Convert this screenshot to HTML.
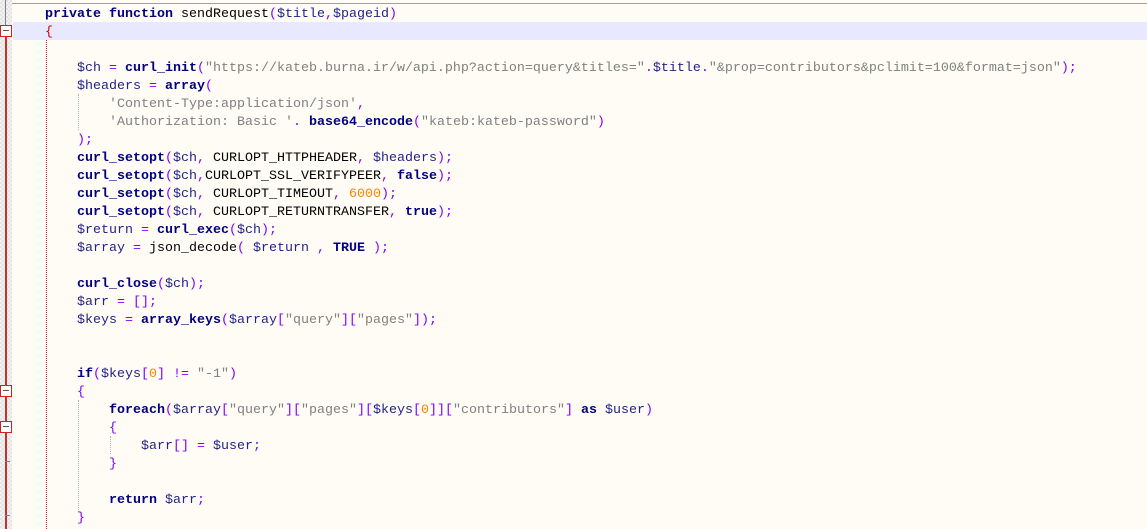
<!DOCTYPE html>
<html><head><meta charset="utf-8"><style>
body{margin:0;width:1147px;height:529px;overflow:hidden;background:#fefcf5;position:relative;font-family:"Liberation Mono",monospace;font-size:13.33px}
.topline{position:absolute;left:12px;top:3px;width:1135px;height:1px;background:#a0a0a0}
.gut{position:absolute;left:0;top:0;width:12px;height:529px;background-color:#f2f2f2;background-image:linear-gradient(45deg,#e4e4e4 25%,transparent 25%,transparent 75%,#e4e4e4 75%),linear-gradient(45deg,#e4e4e4 25%,transparent 25%,transparent 75%,#e4e4e4 75%);background-size:4px 4px;background-position:0 0,2px 2px}
.hl{position:absolute;left:13px;top:22px;width:1134px;height:18px;background:#e8e8ff}
.l{position:absolute;left:45px;height:18px;line-height:18px;white-space:pre;color:#000;margin-top:2px}
.k{color:#000080;font-weight:bold}.v{color:#22228a}.o{color:#8000ff}.s{color:#808080}.n{color:#ff8000}
.box{position:absolute;left:0;width:10px;height:10px;border:1px solid #d02020;background:#fff}
.box:after{content:"";position:absolute;left:2px;top:4px;width:6px;height:1px;background:#555}
.tick{position:absolute;left:5px;width:5px;height:1px;background:#808080}
.vred{position:absolute;left:5px;width:2px;background:#c83030}
.dot{position:absolute;width:0;border-left:1px dotted}
</style></head><body>
<div class="gut"></div>
<div class="topline"></div>
<div class="hl"></div>
<div style="position:absolute;left:5px;top:0;width:1px;height:25px;background:#808080"></div>
<div class="vred" style="top:36px;height:493px"></div>
<div class="box" style="top:25px"></div>
<div class="box" style="top:385px"></div>
<div class="box" style="top:421px"></div>
<div class="tick" style="top:461px"></div>
<div class="tick" style="top:515px"></div>
<div class="dot" style="left:46px;top:40px;height:489px;border-color:#c03030"></div>
<div class="dot" style="left:78px;top:94px;height:36px;border-color:#b0b0b0"></div>
<div class="dot" style="left:78px;top:400px;height:112px;border-color:#b0b0b0"></div>
<div class="dot" style="left:110px;top:436px;height:18px;border-color:#b0b0b0"></div>

<div class="l" style="top:4px"><span class="k">private function</span> sendRequest<span class="o">(</span><span class="v">$title</span><span class="o">,</span><span class="v">$pageid</span><span class="o">)</span></div>
<div class="l" style="top:22px"><span class="o" style="color:#d00000">{</span></div>
<div class="l" style="top:58px">    <span class="v">$ch</span> <span class="o">=</span> <span class="k">curl_init</span><span class="o">(</span><span class="s">"https://kateb.burna.ir/w/api.php?action=query&amp;titles="</span><span class="o">.</span><span class="v">$title</span><span class="o">.</span><span class="s">"&amp;prop=contributors&amp;pclimit=100&amp;format=json"</span><span class="o">);</span></div>
<div class="l" style="top:76px">    <span class="v">$headers</span> <span class="o">=</span> <span class="k">array</span><span class="o">(</span></div>
<div class="l" style="top:94px">        <span class="s">'Content-Type:application/json'</span><span class="o">,</span></div>
<div class="l" style="top:112px">        <span class="s">'Authorization: Basic '</span><span class="o">.</span> <span class="k">base64_encode</span><span class="o">(</span><span class="s">"kateb:kateb-password"</span><span class="o">)</span></div>
<div class="l" style="top:130px">    <span class="o">);</span></div>
<div class="l" style="top:148px">    <span class="k">curl_setopt</span><span class="o">(</span><span class="v">$ch</span><span class="o">,</span> CURLOPT_HTTPHEADER<span class="o">,</span> <span class="v">$headers</span><span class="o">);</span></div>
<div class="l" style="top:166px">    <span class="k">curl_setopt</span><span class="o">(</span><span class="v">$ch</span><span class="o">,</span>CURLOPT_SSL_VERIFYPEER<span class="o">,</span> <span class="k">false</span><span class="o">);</span></div>
<div class="l" style="top:184px">    <span class="k">curl_setopt</span><span class="o">(</span><span class="v">$ch</span><span class="o">,</span> CURLOPT_TIMEOUT<span class="o">,</span> <span class="n">6000</span><span class="o">);</span></div>
<div class="l" style="top:202px">    <span class="k">curl_setopt</span><span class="o">(</span><span class="v">$ch</span><span class="o">,</span> CURLOPT_RETURNTRANSFER<span class="o">,</span> <span class="k">true</span><span class="o">);</span></div>
<div class="l" style="top:220px">    <span class="v">$return</span> <span class="o">=</span> <span class="k">curl_exec</span><span class="o">(</span><span class="v">$ch</span><span class="o">);</span></div>
<div class="l" style="top:238px">    <span class="v">$array</span> <span class="o">=</span> json_decode<span class="o">(</span> <span class="v">$return</span> <span class="o">,</span> <span class="k">TRUE</span> <span class="o">);</span></div>
<div class="l" style="top:274px">    <span class="k">curl_close</span><span class="o">(</span><span class="v">$ch</span><span class="o">);</span></div>
<div class="l" style="top:292px">    <span class="v">$arr</span> <span class="o">=</span> <span class="o">[];</span></div>
<div class="l" style="top:310px">    <span class="v">$keys</span> <span class="o">=</span> <span class="k">array_keys</span><span class="o">(</span><span class="v">$array</span><span class="o">[</span><span class="s">"query"</span><span class="o">][</span><span class="s">"pages"</span><span class="o">]);</span></div>
<div class="l" style="top:364px">    <span class="k">if</span><span class="o">(</span><span class="v">$keys</span><span class="o">[</span><span class="n">0</span><span class="o">]</span> <span class="o">!=</span> <span class="s">"-1"</span><span class="o">)</span></div>
<div class="l" style="top:382px">    <span class="o">{</span></div>
<div class="l" style="top:400px">        <span class="k">foreach</span><span class="o">(</span><span class="v">$array</span><span class="o">[</span><span class="s">"query"</span><span class="o">][</span><span class="s">"pages"</span><span class="o">][</span><span class="v">$keys</span><span class="o">[</span><span class="n">0</span><span class="o">]][</span><span class="s">"contributors"</span><span class="o">]</span> <span class="k">as</span> <span class="v">$user</span><span class="o">)</span></div>
<div class="l" style="top:418px">        <span class="o">{</span></div>
<div class="l" style="top:436px">            <span class="v">$arr</span><span class="o">[]</span> <span class="o">=</span> <span class="v">$user</span><span class="o">;</span></div>
<div class="l" style="top:454px">        <span class="o">}</span></div>
<div class="l" style="top:490px">        <span class="k">return</span> <span class="v">$arr</span><span class="o">;</span></div>
<div class="l" style="top:508px">    <span class="o">}</span></div>
</body></html>
